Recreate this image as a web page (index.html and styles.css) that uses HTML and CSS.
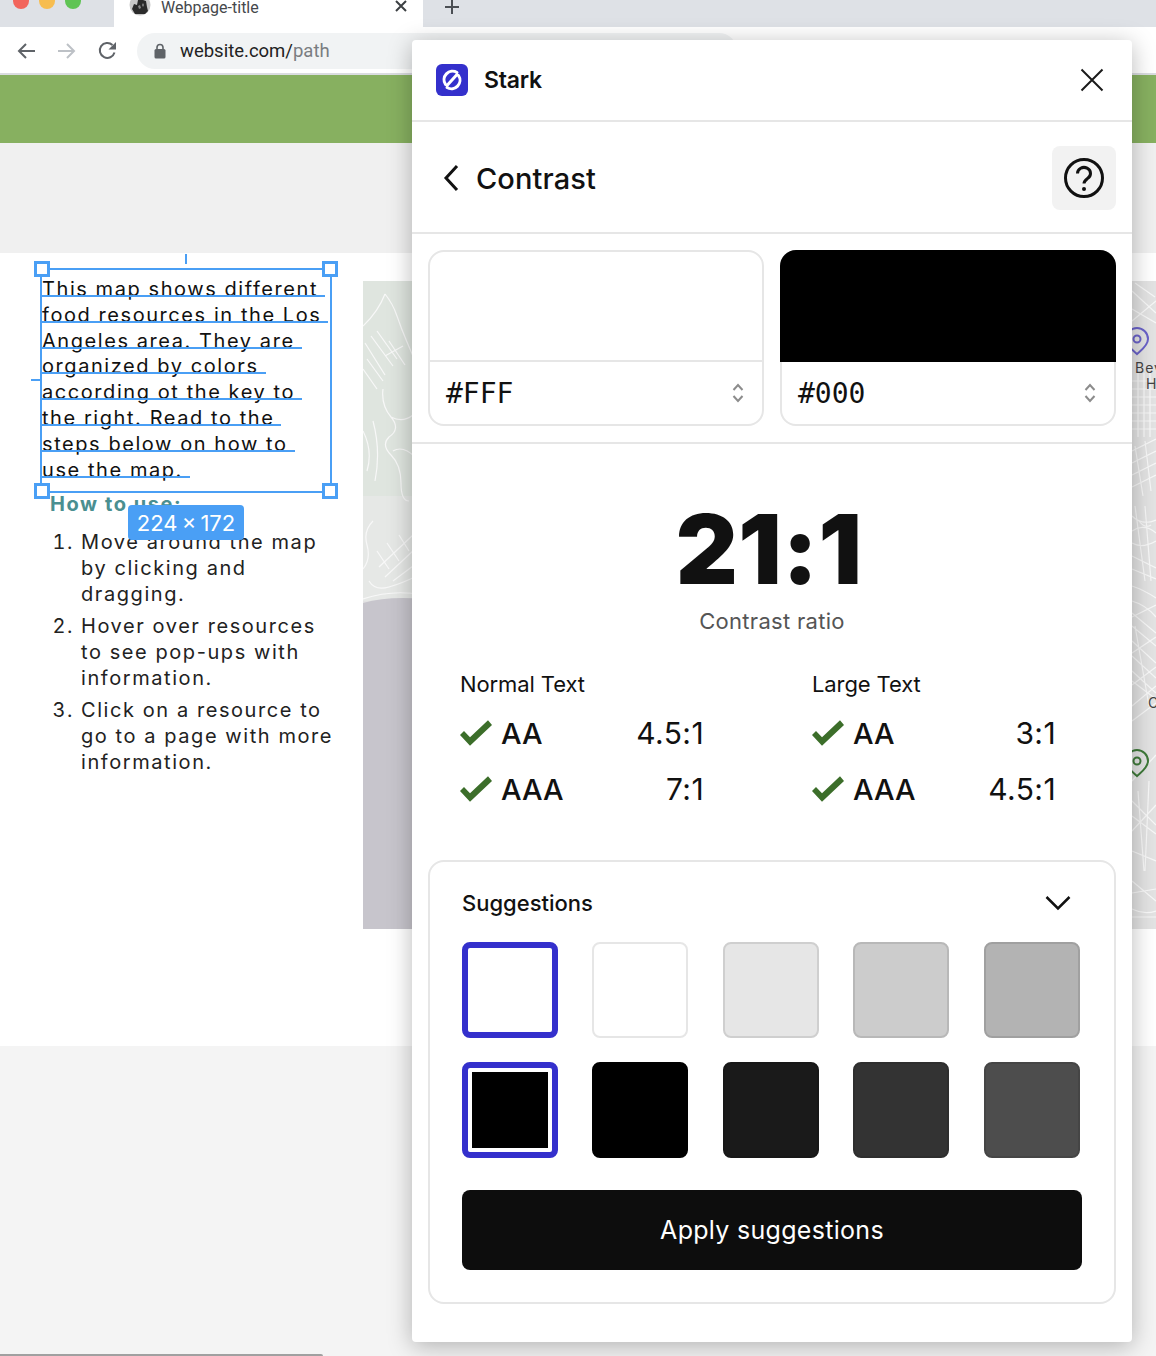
FILE: index.html
```html
<!DOCTYPE html>
<html lang="en">
<head>
  <meta charset="UTF-8">
  <title>Stark Contrast</title>
  <link rel="stylesheet" href="styles.css">
</head>
<body>
  <!-- browser chrome -->
  <div class="tabstrip">
    <div class="lights">
      <span class="light red"></span>
      <span class="light yellow"></span>
      <span class="light green"></span>
    </div>
    <div class="tab">
      <svg class="favicon" width="22" height="22" viewBox="0 0 22 22">
        <circle cx="11" cy="11" r="10.500" fill="#c9c9c9"/>
        <path d="M3 15l2-5 3 1 1-5 3-3 2 3 3 1 1 6 1 4-3 3H6z" fill="#2b2b2b"/>
        <path d="M9 12l2-1 1 3-2 1zM14 9l1 2-1 2-1-2z" fill="#8a8a8a"/>
      </svg>
      <span class="tab-title">Webpage-title</span>
      <svg class="tab-close" width="14" height="14" viewBox="0 0 14 14"><path d="M2 1l10 10M12 1L2 11" stroke="#3c4043" stroke-width="2" fill="none"/></svg>
    </div>
    <svg class="tab-new" width="16" height="16" viewBox="0 0 16 16"><path d="M8 1v14M1 8h14" stroke="#4b4f54" stroke-width="2" fill="none"/></svg>
  </div>
  <div class="toolbar">
    <svg class="nav-icon" width="20" height="20" viewBox="0 0 20 20"><path d="M19 10H3M10 3l-7 7 7 7" stroke="#5f6368" stroke-width="2" fill="none"/></svg>
    <svg class="nav-icon" width="20" height="20" viewBox="0 0 20 20"><path d="M1 10h16M10 3l7 7-7 7" stroke="#bdc1c6" stroke-width="2" fill="none"/></svg>
    <svg class="nav-icon" width="20" height="20" viewBox="0 0 20 20"><path d="M16.500 11.500A7.500 7.500 0 1 1 14.500 4" stroke="#5f6368" stroke-width="2" fill="none"/><path d="M18 1v7.500h-7.500z" fill="#5f6368"/></svg>
    <div class="omnibox">
      <svg width="12" height="16" viewBox="0 0 12 16"><path d="M3 7V4.500a3 3 0 0 1 6 0V7" stroke="#5f6368" stroke-width="1.600" fill="none"/><rect x="0.500" y="6" width="11" height="9.500" rx="1.500" fill="#5f6368"/></svg>
      <span class="url">website.com/<span class="url-path">path</span></span>
    </div>
  </div>

  <!-- page behind -->
  <div class="green-bar"></div>
  <div class="gray-band"></div>
  <div class="content">
    <div class="copy">
      <p class="intro">
        <span class="line">This map shows different</span>
        <span class="line">food resources in the Los</span>
        <span class="line">Angeles area. They are</span>
        <span class="line">organized by colors</span>
        <span class="line">according ot the key to</span>
        <span class="line">the right. Read to the</span>
        <span class="line">steps below on how to</span>
        <span class="line">use the map.</span>
      </p>
      <h3 class="howto">How to use:</h3>
      <ol class="steps">
        <li>Move around the map<br>by clicking and<br>dragging.</li>
        <li>Hover over resources<br>to see pop-ups with<br>information.</li>
        <li>Click on a resource to<br>go to a page with more<br>information.</li>
      </ol>
    </div>
    <svg class="map" width="793" height="648" viewBox="0 0 793 648">
      <rect width="793" height="648" fill="#e3e3e3"/>
      <rect width="60" height="320" fill="#dfe5df"/>
      <rect y="215" width="60" height="105" fill="#e6e8e6"/>
      <path d="M0 322q25-7 60-4v330H0z" fill="#c7c5cc"/>
      <g class="streets">
        <path d="M0 45q15-14 22-32M22 13q8 10 12 22t10 26 6 14"/>
        <path d="M2 62l20 32M8 55l22 30M14 50l20 28M4 78l16 22M22 75l18-10M0 88l14 20M26 60l16 24"/>
        <path d="M20 108q-2 16 8 28t-2 20q-8 8 2 18t10 28 8 18M28 136q12 6 22-2M30 170q10-6 22 6M0 150q10 20 4 40M10 140q8 30 2 60"/>
        <path d="M0 288q8-10 4-24t6-24M6 300q6 10 20 6t30-12M16 286l34-32M22 296l30-28M30 300l24-18M14 270l12 18M24 262l12 18M36 254l10 16"/>
        <path d="M0 318q30-10 60-4" stroke-width="2"/>
        <path d="M769 10l24 22M769 40l24-20M772 2l20 14M769 28l24 14"/>
        <path d="M769 100h24M769 108h24M769 116h24M769 124h24M769 132h24M769 140h24M769 148h24M775 92v64M781 92v64M787 92v64"/>
        <path d="M769 170l24-12M769 182l24-12M769 194l24-12M769 206l24-12M772 165l8 50M782 160l6 50"/>
        <path d="M769 235q10 10 24 4M769 250q12-8 24 2M769 262q10 6 24-2M769 275l24 12M769 288l24 10M772 225l10 75M782 225l6 75M776 240q6 8 12 4"/>
        <path d="M769 305q12 4 24 12M769 320q14 4 24 16M769 332l24 20M769 345l24 20M769 360l24 22M769 375l24 22M769 390l24 22M769 336l24-12M769 372l24-16M769 404l24-18M772 345l14 80"/>
        <path d="M769 400l24 18M769 425l24-20M769 440l24-18"/>
        <path d="M769 520l24 24M769 500l24-26M769 535l24 18M769 550l24-26M769 570l24 10M775 510l6 80M786 500l-4 90M769 600l24 20M769 612l24-4M769 628q12 6 24 2M769 636h24"/>
      </g>
      <path d="M763 58a11 11 0 1 1 22 0c0 7-8 12-11 15-3-3-11-8-11-15z" class="pin-purple"/>
      <circle cx="774" cy="58" r="3.500" class="pin-purple"/>
      <path d="M763 480a11 11 0 1 1 22 0c0 7-8 12-11 15-3-3-11-8-11-15z" class="pin-green"/>
      <circle cx="774" cy="480" r="3.500" class="pin-green"/>
      <text x="772" y="92" class="map-label">Bev</text>
      <text x="783" y="108" class="map-label">H</text>
      <text x="785" y="427" class="map-label">C</text>
    </svg>
  </div>
  <div class="page-bottom"></div>
  <div class="scrollbar"></div>

  <!-- selection overlay -->
  <div class="selection">
    <span class="tick tick-top"></span>
    <span class="tick tick-left"></span>
    <span class="handle tl"></span>
    <span class="handle tr"></span>
    <span class="handle bl"></span>
    <span class="handle br"></span>
    <span class="size-label">224 × 172</span>
  </div>

  <!-- stark panel -->
  <div class="panel">
    <div class="panel-head">
      <div class="brand">
        <svg width="32" height="32" viewBox="0 0 32 32">
          <rect width="32" height="32" rx="6" fill="#3430cc"/>
          <path d="M21 8.500A8.500 8.500 0 0 0 9.500 20.500M11 23.500A8.500 8.500 0 0 0 22.500 11.500M11 21.500L21 10.500" stroke="#fff" stroke-width="3" stroke-linecap="round" fill="none"/>
        </svg>
        <span class="brand-name">Stark</span>
      </div>
      <svg width="24" height="24" viewBox="0 0 24 24"><path d="M1.500 1.500l21 21M22.500 1.500l-21 21" stroke="#1a1a1a" stroke-width="2" fill="none"/></svg>
    </div>

    <div class="panel-title">
      <div class="title-left">
        <svg width="18" height="28" viewBox="0 0 18 28"><path d="M15 2L4 14l11 12" stroke="#111" stroke-width="3" fill="none"/></svg>
        <span class="title-text">Contrast</span>
      </div>
      <div class="help">
        <svg width="40" height="40" viewBox="0 0 40 40">
          <circle cx="20" cy="20" r="18.500" stroke="#111" stroke-width="3" fill="none"/>
          <path d="M13.500 15.500a6.500 6 0 1 1 10 5c-2 1.500-3.500 2.500-3.500 5" stroke="#111" stroke-width="3" fill="none"/>
          <circle cx="20" cy="31" r="2" fill="#111"/>
        </svg>
      </div>
    </div>

    <div class="pickers">
      <div class="picker">
        <div class="preview white"></div>
        <div class="hex-row">
          <span class="hex">#FFF</span>
          <svg width="12" height="20" viewBox="0 0 12 20"><path d="M1.500 7L6 2l4.500 5M1.500 13L6 18l4.500-5" stroke="#8c8c8c" stroke-width="2" fill="none"/></svg>
        </div>
      </div>
      <div class="picker">
        <div class="preview black"></div>
        <div class="hex-row">
          <span class="hex">#000</span>
          <svg width="12" height="20" viewBox="0 0 12 20"><path d="M1.500 7L6 2l4.500 5M1.500 13L6 18l4.500-5" stroke="#8c8c8c" stroke-width="2" fill="none"/></svg>
        </div>
      </div>
    </div>

    <div class="result">
      <div class="ratio">21:1</div>
      <div class="ratio-label">Contrast ratio</div>
      <div class="levels">
        <div class="level">
          <div class="level-name">Normal Text</div>
          <div class="level-row">
            <span class="grade"><svg width="32" height="26" viewBox="0 0 32 26"><path d="M0 15l10 10.700L32 5 28 .3 10 17.300 4 11z" fill="#3c6e2a"/></svg>AA</span>
            <span class="value">4.5:1</span>
          </div>
          <div class="level-row">
            <span class="grade"><svg width="32" height="26" viewBox="0 0 32 26"><path d="M0 15l10 10.700L32 5 28 .3 10 17.300 4 11z" fill="#3c6e2a"/></svg>AAA</span>
            <span class="value">7:1</span>
          </div>
        </div>
        <div class="level">
          <div class="level-name">Large Text</div>
          <div class="level-row">
            <span class="grade"><svg width="32" height="26" viewBox="0 0 32 26"><path d="M0 15l10 10.700L32 5 28 .3 10 17.300 4 11z" fill="#3c6e2a"/></svg>AA</span>
            <span class="value">3:1</span>
          </div>
          <div class="level-row">
            <span class="grade"><svg width="32" height="26" viewBox="0 0 32 26"><path d="M0 15l10 10.700L32 5 28 .3 10 17.300 4 11z" fill="#3c6e2a"/></svg>AAA</span>
            <span class="value">4.5:1</span>
          </div>
        </div>
      </div>
    </div>

    <div class="suggestions">
      <div class="sugg-head">
        <span class="sugg-title">Suggestions</span>
        <svg width="26" height="16" viewBox="0 0 26 16"><path d="M1.500 2L13 13.500 24.500 2" stroke="#111" stroke-width="2.500" fill="none"/></svg>
      </div>
      <div class="sugg-grid">
        <div class="swatch selected"></div>
        <div class="swatch s-white"></div>
        <div class="swatch s-g1"></div>
        <div class="swatch s-g2"></div>
        <div class="swatch s-g3"></div>
        <div class="swatch selected"><div class="inner-black"></div></div>
        <div class="swatch s-k0"></div>
        <div class="swatch s-k1"></div>
        <div class="swatch s-k2"></div>
        <div class="swatch s-k3"></div>
      </div>
      <button class="apply">Apply suggestions</button>
    </div>
  </div>
</body>
</html>
```

FILE: styles.css
```css
* {
  box-sizing: border-box;
}

body {
  margin: 0;
  width: 1156px;
  height: 1356px;
  position: relative;
  overflow: hidden;
  background: #f4f4f4;
  font-family: Inter, "Liberation Sans", sans-serif;
  color: #111;
}

/* browser chrome */
.tabstrip {
  height: 27px;
  background: #dee1e6;
  display: flex;
  align-items: flex-end;
}

.lights {
  width: 114px;
  height: 27px;
  padding: 0 0 0 13px;
  display: flex;
  gap: 10px;
  margin-top: -17px;
  flex-shrink: 0;
  align-items: flex-start;
  transform: translateY(-7px);
}

.light {
  width: 16px;
  height: 16px;
  border-radius: 50%;
}

.red { background: #f2655c; }
.yellow { background: #f7bd50; }
.green { background: #5fc454; }

.tab {
  width: 309px;
  height: 27px;
  background: #fff;
  display: flex;
  align-items: flex-start;
  padding: 0 15px;
}

.favicon {
  margin-top: -6px;
  flex-shrink: 0;
}

.tab-title {
  margin-left: 10px;
  font-family: Roboto, sans-serif;
  font-size: 16px;
  line-height: 16px;
  color: #45484c;
  flex: 1;
}

.tab-close {
  margin-right: 0;
}

.tab-new {
  margin: 0 0 12px 21px;
}

.toolbar {
  height: 48px;
  background: #fff;
  border-bottom: 2px solid #dadce0;
  display: flex;
  align-items: center;
  padding: 2px 0 0 16px;
  gap: 21px;
}

.nav-icon {
  flex-shrink: 0;
}

.omnibox {
  width: 600px;
  height: 36px;
  margin-left: -2px;
  border-radius: 18px;
  background: #f1f3f4;
  display: flex;
  align-items: center;
  padding-left: 17px;
  gap: 14px;
}

.url {
  font-family: Roboto, sans-serif;
  font-size: 18.500px;
  color: #222;
}

.url-path {
  color: #7a7d81;
}

/* page behind the panel */
.green-bar {
  height: 68px;
  background: #87b060;
}

.gray-band {
  height: 110px;
  background: #f0f0f0;
}

.content {
  height: 793px;
  background: #fff;
  display: flex;
  align-items: flex-start;
  padding: 24px 0 0 42px;
}

.copy {
  width: 321px;
  flex-shrink: 0;
  font-size: 20px;
  line-height: 25.800px;
  letter-spacing: 1.570px;
  color: #222;
}

.intro {
  margin: 0;
}

.line {
  display: block;
  width: fit-content;
  height: 25.800px;
  white-space: nowrap;
  position: relative;
  color: #111;
}

.line::after {
  content: "";
  position: absolute;
  left: 0;
  right: -7px;
  top: 18px;
  height: 2px;
  background: #4a9ff5;
}

.howto {
  margin: 8px 0 0 8px;
  font-size: 20px;
  line-height: 26px;
  font-weight: 700;
  color: #4a8f91;
}

.steps {
  margin: 13px 0 0;
  padding: 0 0 0 39px;
  white-space: nowrap;
}

.steps li {
  margin-bottom: 6.600px;
}

.map {
  display: block;
  margin-top: 4px;
  flex-shrink: 0;
}

.streets path {
  fill: none;
  stroke: #f8f8f8;
  stroke-width: 1.200;
}

.pin-purple {
  fill: none;
  stroke: #6a62c9;
  stroke-width: 2;
}

.pin-green {
  fill: none;
  stroke: #3f7a3a;
  stroke-width: 2;
}

.map-label {
  font-size: 14px;
  letter-spacing: 1px;
  fill: #444;
}

.page-bottom {
  height: 310px;
  background: #f4f4f4;
}

.scrollbar {
  position: absolute;
  left: 0;
  bottom: 0;
  width: 323px;
  height: 2px;
  border-radius: 0 2px 0 0;
  background: #a0a0a0;
}

/* selection overlay */
.selection {
  position: absolute;
  left: 40px;
  top: 268px;
  width: 292px;
  height: 225px;
  border: 2px solid #4a9ff5;
}

.handle {
  position: absolute;
  width: 16px;
  height: 16px;
  background: #fff;
  border: 3px solid #4a9ff5;
}

.tl { left: -8px; top: -9px; }
.tr { right: -8px; top: -9px; }
.bl { left: -8px; bottom: -8px; }
.br { right: -8px; bottom: -8px; }

.tick {
  position: absolute;
}

.tick-top {
  left: 143px;
  top: -16px;
  height: 10px;
  border-left: 2px dashed #4a9ff5;
}

.tick-left {
  left: -11px;
  top: 109px;
  width: 9px;
  border-top: 2px dashed #4a9ff5;
}

.size-label {
  position: absolute;
  left: 86px;
  top: 235px;
  width: 116px;
  height: 35px;
  border-radius: 4px;
  background: #4a9ff5;
  color: #fff;
  font-size: 22px;
  line-height: 37px;
  text-align: center;
  white-space: nowrap;
  word-spacing: -2px;
}

/* stark panel */
.panel {
  position: absolute;
  left: 412px;
  top: 40px;
  width: 720px;
  height: 1302px;
  background: #fff;
  border-radius: 4px;
  box-shadow: 0 4px 24px rgba(0, 0, 0, 0.28);
}

.panel-head {
  height: 82px;
  border-bottom: 2px solid #e6e6e6;
  display: flex;
  align-items: center;
  justify-content: space-between;
  padding: 0 28px 0 24px;
}

.brand {
  display: flex;
  align-items: center;
  gap: 16px;
}

.brand-name {
  font-size: 23px;
  font-weight: 600;
  letter-spacing: -0.200px;
}

.panel-title {
  height: 112px;
  border-bottom: 2px solid #e6e6e6;
  display: flex;
  align-items: center;
  justify-content: space-between;
  padding: 2px 16px 0 30px;
}

.title-left {
  display: flex;
  align-items: center;
  gap: 17px;
}

.title-text {
  font-size: 29px;
  font-weight: 500;
  letter-spacing: 0.100px;
  margin-left: -1px;
}

.help {
  width: 64px;
  height: 64px;
  border-radius: 8px;
  background: #f2f2f2;
  display: flex;
  align-items: center;
  justify-content: center;
}

.pickers {
  display: flex;
  gap: 16px;
  padding: 16px;
  border-bottom: 2px solid #e6e6e6;
}

.picker {
  width: 336px;
  height: 176px;
  border: 2px solid #e6e6e6;
  border-radius: 16px;
}

.preview {
  height: 110px;
  border-bottom: 2px solid #e6e6e6;
}

.preview.black {
  background: #000;
  margin: -2px -2px 0;
  height: 112px;
  border-bottom: none;
  border-radius: 16px 16px 0 0;
}

.hex-row {
  height: 62px;
  display: flex;
  align-items: center;
  justify-content: space-between;
  padding: 0 18px 0 16px;
}

.hex {
  font-family: "DejaVu Sans Mono", monospace;
  font-size: 28px;
}

.result {
  height: 416px;
  padding-top: 57px;
}

.ratio {
  font-size: 96px;
  line-height: 96px;
  font-weight: 900;
  letter-spacing: 0.500px;
  text-align: center;
  padding-right: 6px;
  color: #111;
}

.ratio-label {
  margin-top: 10px;
  font-size: 22px;
  line-height: 28px;
  letter-spacing: 0.300px;
  text-align: center;
  color: #555;
}

.levels {
  display: flex;
  gap: 108px;
  margin-top: 35px;
  padding-left: 48px;
}

.level {
  width: 244px;
}

.level-name {
  font-size: 22px;
  line-height: 28px;
  letter-spacing: -0.100px;
  margin-bottom: 7px;
}

.level-row {
  height: 56px;
  display: flex;
  align-items: center;
  justify-content: space-between;
  font-size: 29px;
}

.grade {
  display: flex;
  align-items: center;
  gap: 9px;
  font-weight: 500;
}

.value {
  font-size: 30px;
  font-weight: 400;
  letter-spacing: 0.400px;
}

.suggestions {
  width: 688px;
  height: 444px;
  margin-left: 16px;
  border: 2px solid #e6e6e6;
  border-radius: 16px;
  padding: 0 32px;
}

.sugg-head {
  height: 80px;
  display: flex;
  align-items: center;
  justify-content: space-between;
  padding: 1px 11px 0 0;
}

.sugg-title {
  font-size: 22px;
  font-weight: 500;
}

.sugg-grid {
  width: 617.600px;
  display: grid;
  grid-template-columns: repeat(5, 96px);
  justify-content: space-between;
  row-gap: 24px;
}

.swatch {
  height: 96px;
  border-radius: 8px;
  border: 2px solid transparent;
}

.swatch.selected {
  border: 6px solid #3430cc;
  padding: 4px;
  background: #fff;
}

.inner-black {
  height: 100%;
  background: #000;
}

.s-white { background: #fff; border-color: #e6e6e6; }
.s-g1 { background: #e6e6e6; border-color: #cfcfcf; }
.s-g2 { background: #cccccc; border-color: #b8b8b8; }
.s-g3 { background: #b3b3b3; border-color: #a0a0a0; }
.s-k0 { background: #000; border-color: #000; }
.s-k1 { background: #1a1a1a; border-color: #171717; }
.s-k2 { background: #333; border-color: #2e2e2e; }
.s-k3 { background: #4d4d4d; border-color: #454545; }

.apply {
  display: block;
  width: 620px;
  height: 80px;
  margin-top: 32px;
  border: none;
  border-radius: 8px;
  background: #0d0d0d;
  color: #fff;
  font-family: inherit;
  font-size: 25px;
  letter-spacing: 0.300px;
}
```
